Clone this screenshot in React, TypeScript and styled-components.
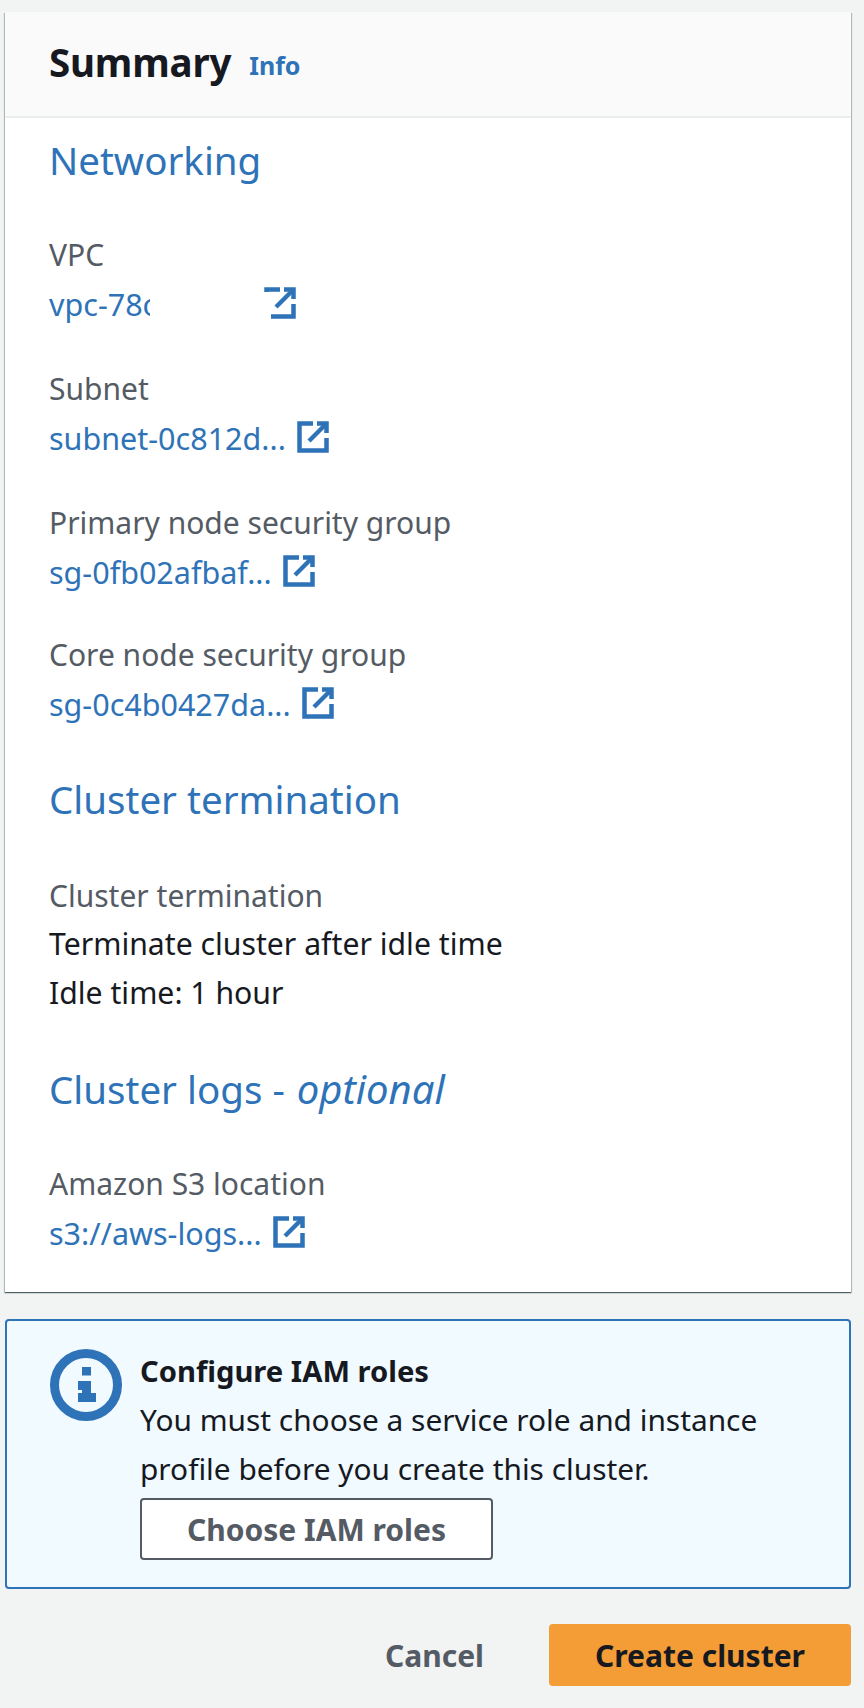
import React from "react";
import styled, { createGlobalStyle } from "styled-components";

const Global = createGlobalStyle`
  html, body { margin: 0; padding: 0; background: #f2f3f3; }
  body { font-family: "Noto Sans", "Open Sans", sans-serif; color: #16191f; }
`;
const Page = styled.div`
  width: 864px; height: 1708px; box-sizing: border-box; padding: 12px 13px 0 5px;
  display: flex; flex-direction: column; overflow: hidden;
`;
const Card = styled.section`
  background: #fff; height: 1280px; box-shadow: 0 1px 1px 0 rgba(0,28,36,.5), 1px 1px 1px 0 rgba(0,28,36,.2), -1px 1px 1px 0 rgba(0,28,36,.2);
  display: flex; flex-direction: column;
`;
const CardHeader = styled.header`
  height: 104px; background: #fafafa; border-bottom: 2px solid #eaeded;
  display: flex; align-items: center; padding-left: 44px; gap: 18px;
`;
const Title = styled.h2`
  margin: 0; font-size: 38.5px; font-weight: 700; line-height: 48px; letter-spacing: -0.2px; position: relative; top: -2px;
`;
const InfoLink = styled.a`
  font-size: 25px; font-weight: 700; color: #2e73b8; line-height: 32px; position: relative; top: 1px;
`;
const CardBody = styled.div`
  padding: 18px 44px 0; display: flex; flex-direction: column;
`;
const SectionTitle = styled.h3<{ $mt?: number }>`
  margin: ${p => p.$mt ?? 0}px 0 0; font-size: 38.5px; font-weight: 400; line-height: 48px; color: #2e73b8;
  em { font-style: italic; font-size: 40px; margin-left: 2px; }
`;
const Field = styled.div<{ $mt: number }>`
  margin-top: ${p => p.$mt}px; display: flex; flex-direction: column;
`;
const Label = styled.div`
  font-size: 30px; line-height: 48px; color: #545b64; height: 49px;
`;
const Values = styled.div`
  margin-top: -2px;
`;
const Value = styled.div`
  font-size: 30.2px; line-height: 49px; color: #16191f;
`;
const LinkRow = styled.div`
  position: relative; display: flex; align-items: center; gap: 11px; font-size: 30.5px; line-height: 48px; color: #2e73b8; height: 48px;
`;
const LinkText = styled.span<{ $redact?: boolean }>`
  white-space: nowrap; ${p => p.$redact ? "width: 204px;" : ""}
`;
const Redaction = styled.div`
  position: absolute; left: 101px; top: 0; width: 121px; height: 48px; background: #fff;
  clip-path: polygon(0 0, 114px 0, 114px 12px, 121px 12px, 121px 48px, 0 48px);
`;
const Ext = styled.svg`
  width: 32px; height: 32px; flex: none; display: block; position: relative; top: -1px;
`;
const Alert = styled.div`
  margin-top: 27px; height: 270px; box-sizing: border-box; border: 2px solid #2e73b8; border-radius: 4px; background: #f1faff;
  display: flex; padding: 26px 0 0 43px; gap: 16px; width: 846px;
`;
const AlertIcon = styled.svg`
  width: 72px; height: 72px; flex: none; margin-top: 2px;
`;
const AlertBody = styled.div`
  display: flex; flex-direction: column; align-items: flex-start; margin-left: 2px; width: 660px;
`;
const AlertTitle = styled.div`
  font-size: 29.2px; font-weight: 700; line-height: 48px;
`;
const AlertText = styled.div`
  font-size: 29.85px; line-height: 49px;
`;
const Secondary = styled.button`
  margin-top: 5px; width: 353px; height: 62px; border: 2px solid #545b64; border-radius: 4px; background: #fff; color: #545b64;
  font: 700 30px "Noto Sans", sans-serif; padding: 0;
`;
const Actions = styled.div`
  margin-top: 35px; display: flex; justify-content: flex-end; align-items: center;
`;
const Cancel = styled.button`
  border: 0; background: none; color: #545b64; font: 700 30px "Noto Sans", sans-serif; padding: 0; margin-right: 65px;
`;
const Primary = styled.button`
  width: 302px; height: 62px; border: 0; border-radius: 4px; background: #f49d37; color: #16191f;
  font: 700 30px "Noto Sans", sans-serif; padding: 0;
`;

const ExternalIcon = () => (
  <Ext viewBox="0 0 32 32" fill="none" stroke="#2e73b8" strokeWidth="4.5">
    <path d="M16 2.5H2.5v27h27V17" />
    <path d="M20 2.5h9.5V12" />
    <path d="M29 3 12 20" />
  </Ext>
);
const Link = ({ text, redact }: { text: string; redact?: boolean }) => (
  <LinkRow>
    <LinkText $redact={redact}>{text}</LinkText>
    <ExternalIcon />
    {redact && <Redaction />}
  </LinkRow>
);

export default function App() {
  return (
    <Page>
      <Global />
      <Card>
        <CardHeader>
          <Title>Summary</Title>
          <InfoLink>Info</InfoLink>
        </CardHeader>
        <CardBody>
          <SectionTitle>Networking</SectionTitle>
          <Field $mt={47}>
            <Label>VPC</Label>
            <Link text="vpc-78c" redact />
          </Field>
          <Field $mt={37}>
            <Label>Subnet</Label>
            <Link text="subnet-0c812d..." />
          </Field>
          <Field $mt={37}>
            <Label>Primary node security group</Label>
            <Link text="sg-0fb02afbaf..." />
          </Field>
          <Field $mt={35}>
            <Label>Core node security group</Label>
            <Link text="sg-0c4b0427da..." />
          </Field>
          <SectionTitle $mt={47}>Cluster termination</SectionTitle>
          <Field $mt={49}>
            <Label>Cluster termination</Label>
            <Values>
              <Value>Terminate cluster after idle time</Value>
              <Value>Idle time: 1 hour</Value>
            </Values>
          </Field>
          <SectionTitle $mt={48}>Cluster logs - <em>optional</em></SectionTitle>
          <Field $mt={47}>
            <Label>Amazon S3 location</Label>
            <Link text="s3://aws-logs..." />
          </Field>
        </CardBody>
      </Card>
      <Alert>
        <AlertIcon viewBox="0 0 72 72">
          <circle cx="36" cy="36" r="31.5" fill="none" stroke="#2e73b8" strokeWidth="9" />
          <rect x="32" y="18" width="9" height="8.5" fill="#2e73b8" />
          <path d="M28 32h13v12h5v9H28v-9h4v-3h-4z" fill="#2e73b8" />
        </AlertIcon>
        <AlertBody>
          <AlertTitle>Configure IAM roles</AlertTitle>
          <AlertText>You must choose a service role and instance profile before you create this cluster.</AlertText>
          <Secondary>Choose IAM roles</Secondary>
        </AlertBody>
      </Alert>
      <Actions>
        <Cancel>Cancel</Cancel>
        <Primary>Create cluster</Primary>
      </Actions>
    </Page>
  );
}
